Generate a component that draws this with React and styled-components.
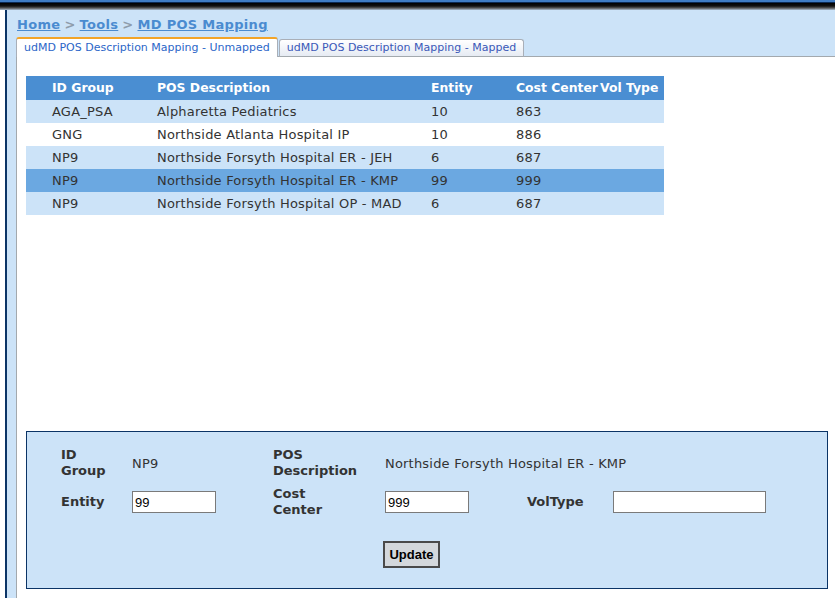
import styled, { createGlobalStyle } from 'styled-components';

const GlobalStyle = createGlobalStyle`
  html, body {
    margin: 0;
    padding: 0;
    background: #ffffff;
    font-family: "DejaVu Sans", Verdana, sans-serif;
    font-size: 13px;
    color: #333333;
  }
`;

const Page = styled.div`
  width: 835px;
  height: 598px;
  overflow: hidden;
  display: flex;
  flex-direction: column;
`;

const TopBar = styled.div`
  height: 10px;
  flex: none;
  background: linear-gradient(
    #3f7cc4 0px, #3f7cc4 2px, #0c2b55 2px, #0c2b55 3px,
    #000000 3px, #111111 6px, #555555 8px, #a9bccf 10px
  );
`;

const Frame = styled.div`
  flex: 1;
  margin-left: 5px;
  border-left: 2px solid #0b3466;
  background: #cce3f8;
  display: flex;
  flex-direction: column;
`;

const Breadcrumb = styled.div`
  padding: 7px 0 0 10px;
  line-height: 16px;
  font-weight: bold;
  font-size: 13px;
  letter-spacing: 0.3px;
  color: #8a9aac;
`;

const Crumb = styled.a`
  color: #4a8bd0;
  text-decoration: underline;
`;

const Sep = styled.span`
  color: #8e9cab;
  padding: 0 4px;
`;

const TabBar = styled.div`
  margin-top: 4px;
  margin-left: 9px;
  display: flex;
  align-items: flex-end;
  border-bottom: 1px solid #a3a9ae;
  height: 19px;
`;

const Tab = styled.div`
  position: relative;
  top: 1px;
  box-sizing: border-box;
  height: ${(p) => (p.$active ? '20px' : '18px')};
  padding: 0 7px;
  margin-right: 1px;
  font-size: 11px;
  line-height: ${(p) => (p.$active ? '17px' : '16px')};
  color: ${(p) => (p.$active ? '#2b66c8' : '#3a58b8')};
  background: ${(p) => (p.$active ? '#ffffff' : 'linear-gradient(#ffffff, #e6ebf3)')};
  border: 1px solid #a9afb8;
  border-top: ${(p) => (p.$active ? '2px solid #f2a428' : '1px solid #a9afb8')};
  border-bottom: ${(p) => (p.$active ? 'none' : '1px solid #a3a9ae')};
  border-radius: 3px 3px 0 0;
  white-space: nowrap;
`;

const Content = styled.div`
  flex: 1;
  margin-left: 9px;
  border-left: 1px solid #a3a9ae;
  background: #ffffff;
  padding: 19px 0 0 9px;
`;

const Grid = styled.div`
  width: 638px;
  display: grid;
  grid-template-columns: 131px 274px 85px 84px 64px;
`;

const HeadCell = styled.div`
  background: #4a8ed2;
  color: #ffffff;
  font-weight: bold;
  font-size: 12.4px;
  height: 24px;
  line-height: 23px;
  padding-left: ${(p) => (p.$first ? '26px' : '0')};
  white-space: nowrap;
`;

const Cell = styled.div`
  background: ${(p) => p.$bg};
  color: #333333;
  height: 23px;
  line-height: 24px;
  letter-spacing: 0.2px;
  padding-left: ${(p) => (p.$first ? '26px' : '0')};
  white-space: nowrap;
`;

const Panel = styled.div`
  margin-top: 216px;
  width: 802px;
  box-sizing: border-box;
  height: 158px;
  border: 1px solid #0b3466;
  background: #cce3f8;
  padding: 15px 0 0 34px;
  display: grid;
  grid-template-columns: 71px 141px 112px 142px 86px 160px;
  grid-template-rows: 32px 32px auto;
  row-gap: 7px;
  align-items: center;
  align-content: start;
`;

const Label = styled.div`
  font-weight: bold;
  line-height: 16px;
  color: #333333;
`;

const Value = styled.div`
  color: #333333;
  letter-spacing: 0.2px;
  white-space: nowrap;
`;

const Input = styled.input`
  box-sizing: border-box;
  width: ${(p) => p.$w}px;
  height: 22px;
  border: 1px solid #7a7a7a;
  background: #ffffff;
  font-family: "Liberation Sans", Arial, sans-serif;
  font-size: 13px;
  color: #000000;
  padding: 0 2px;
  outline: none;
`;

const ButtonCell = styled.div`
  grid-column: 4;
  margin-top: 16px;
  margin-left: -2px;
`;

const Button = styled.button`
  box-sizing: border-box;
  width: 57px;
  height: 27px;
  background: #d4d8dc;
  border: 2px solid #4a4a4a;
  font-family: "Liberation Sans", Arial, sans-serif;
  font-weight: bold;
  font-size: 13px;
  color: #000000;
  padding: 0;
`;

const rows = [
  ['AGA_PSA', 'Alpharetta Pediatrics', '10', '863', '', '#cce3f8'],
  ['GNG', 'Northside Atlanta Hospital IP', '10', '886', '', '#ffffff'],
  ['NP9', 'Northside Forsyth Hospital ER - JEH', '6', '687', '', '#cce3f8'],
  ['NP9', 'Northside Forsyth Hospital ER - KMP', '99', '999', '', '#6ba8e1'],
  ['NP9', 'Northside Forsyth Hospital OP - MAD', '6', '687', '', '#cce3f8'],
];

const headers = ['ID Group', 'POS Description', 'Entity', 'Cost Center', 'Vol Type'];

export default function App() {
  return (
    <Page>
      <GlobalStyle />
      <TopBar />
      <Frame>
        <Breadcrumb>
          <Crumb>Home</Crumb>
          <Sep>&gt;</Sep>
          <Crumb>Tools</Crumb>
          <Sep>&gt;</Sep>
          <Crumb>MD POS Mapping</Crumb>
        </Breadcrumb>
        <TabBar>
          <Tab $active>udMD POS Description Mapping - Unmapped</Tab>
          <Tab>udMD POS Description Mapping - Mapped</Tab>
        </TabBar>
        <Content>
          <Grid>
            {headers.map((h, i) => (
              <HeadCell key={h} $first={i === 0}>{h}</HeadCell>
            ))}
            {rows.map((r, ri) =>
              r.slice(0, 5).map((c, ci) => (
                <Cell key={`${ri}-${ci}`} $bg={r[5]} $first={ci === 0}>{c}</Cell>
              ))
            )}
          </Grid>
          <Panel>
            <Label>ID<br />Group</Label>
            <Value>NP9</Value>
            <Label>POS<br />Description</Label>
            <Value>Northside Forsyth Hospital ER - KMP</Value>
            <div />
            <div />
            <Label>Entity</Label>
            <div><Input $w={84} defaultValue="99" /></div>
            <Label>Cost<br />Center</Label>
            <div><Input $w={84} defaultValue="999" /></div>
            <Label>VolType</Label>
            <div><Input $w={153} defaultValue="" /></div>
            <ButtonCell>
              <Button>Update</Button>
            </ButtonCell>
          </Panel>
        </Content>
      </Frame>
    </Page>
  );
}
